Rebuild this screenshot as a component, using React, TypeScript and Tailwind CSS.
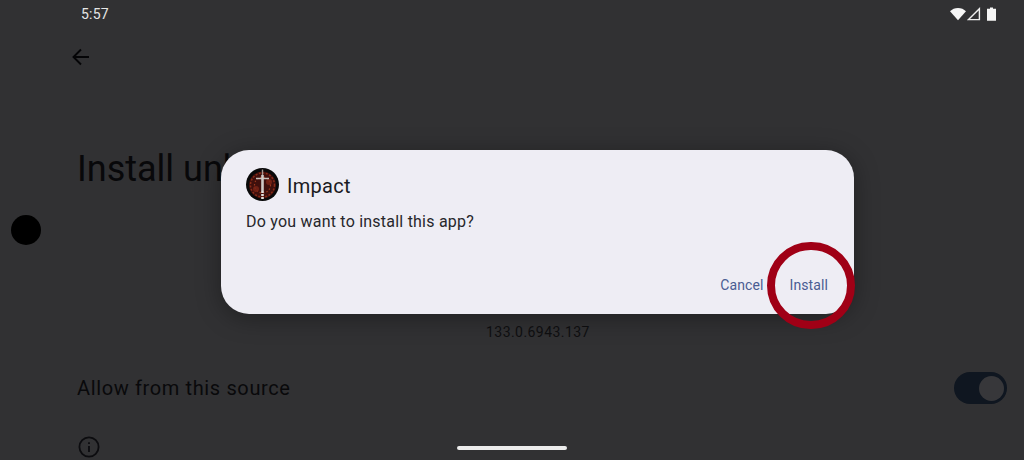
export default function App() {
  return (
    <div className="relative w-[1024px] h-[460px] overflow-hidden bg-[#313133] font-['Roboto',sans-serif]">
      {/* status bar */}
      <div className="flex h-[28px] items-center justify-between pl-[81px] pr-[28px]">
        <span className="text-[14px] leading-[28px] tracking-[0.2px] text-[#e6e6e6]">5:57</span>
        <div className="flex items-center">
          <svg width="16" height="14" viewBox="0 0 16 14"><path d="M0 4.300C2.100 2.200 4.900 1 8 1s5.900 1.200 8 3.300L8 13.200z" fill="#f6f6f6" /></svg>
          <svg width="14" height="14" viewBox="0 0 14 14" className="ml-[1px]"><path d="M1.500 12.600L12.400 1.700V12.600z" fill="none" stroke="#eeeeee" strokeWidth="1.400" /></svg>
          <svg width="9" height="14" viewBox="0 0 9 14" className="ml-[6px]"><path d="M3 0.500h3v1.200h3V13.700H0V1.700h3z" fill="#f6f6f6" /></svg>
        </div>
      </div>

      {/* page content, dimmed */}
      <div className="flex flex-col text-[#08080a]">
        <div className="flex h-[58px] items-center pl-[69px]">
          <svg width="24" height="24" viewBox="0 0 24 24" fill="none" stroke="#050507" strokeWidth="1.900"><path d="M20 12H4.500M12 4.500L4.500 12l7.500 7.500" /></svg>
        </div>
        <h1 className="mt-[38px] pl-[77px] text-[36px] font-normal leading-[90px]">Install unknown apps</h1>
        <div className="mt-[108px] pl-[486px] text-[14px] leading-[20px] tracking-[0.45px] text-[#0f0f11]">133.0.6943.137</div>
        <div className="mt-[30px] flex items-center justify-between pl-[77px] pr-[17px]">
          <span className="text-[20px] leading-[32px] tracking-[0.63px] text-[#09090b]">Allow from this source</span>
          <div className="flex h-[32px] w-[53px] items-center justify-end rounded-full bg-[#0f1620] pr-[3px]">
            <div className="h-[25px] w-[25px] rounded-full bg-[#37373a]" />
          </div>
        </div>
        <div className="mt-[32px] pl-[78px]">
          <svg width="22" height="22" viewBox="0 0 22 22" fill="none" stroke="#0c0c0f" strokeWidth="1.800">
            <circle cx="11" cy="11" r="9.600" />
            <path d="M11 10v6" />
            <path d="M11 6.200v1.800" />
          </svg>
        </div>
      </div>

      {/* floating black dot */}
      <div className="absolute left-[11px] top-[215px] h-[30px] w-[30px] rounded-full bg-black" />

      {/* dialog */}
      <div className="absolute left-[221px] top-[150px] flex h-[164px] w-[633px] flex-col rounded-[28px] bg-[#eeedf4] px-[25px] shadow-[0_4px_24px_rgba(0,0,0,0.35)]">
        <div className="mt-[18px] flex items-center gap-[8px]">
          <svg width="33" height="33" viewBox="0 0 33 33">
            <circle cx="16.500" cy="16.500" r="16.500" fill="#090909" />
            <circle cx="16.500" cy="17" r="13.500" fill="#3f100d" />
            <circle cx="16.500" cy="17" r="12" fill="none" stroke="#8a2c18" strokeWidth="1.500" strokeDasharray="2 1.500" />
            <circle cx="16.500" cy="17" r="8" fill="none" stroke="#9c3a1c" strokeWidth="1.200" strokeDasharray="1.500 2" />
            <circle cx="10" cy="21" r="3" fill="#7a2416" opacity="0.8" />
            <circle cx="23" cy="14" r="3" fill="#7e2616" opacity="0.8" />
            <path d="M16.500 1.500V7" stroke="#a89a94" strokeWidth="1.400" />
            <path d="M10 10.500h13" stroke="#c9c2bc" strokeWidth="1.500" />
            <path d="M16.500 7v16" stroke="#cfcac6" strokeWidth="2.600" />
            <path d="M16.500 23v8" stroke="#e2dedb" strokeWidth="2.600" strokeDasharray="2 1" />
          </svg>
          <span className="translate-y-[2px] text-[20px] leading-[33px] tracking-[0.3px] text-[#1b1b1f]">Impact</span>
        </div>
        <div className="mt-[11px] text-[16px] leading-[20px] tracking-[0.22px] text-[#27272b]">Do you want to install this app?</div>
        <div className="mt-auto mb-[19px] flex justify-end gap-[26px] pr-[1px]">
          <span className="text-[14px] leading-[20px] tracking-[0.1px] text-[#4a5c92]">Cancel</span>
          <span className="text-[14px] leading-[20px] tracking-[0.1px] text-[#4a5c92]">Install</span>
        </div>
      </div>

      {/* red highlight ring */}
      <div className="absolute left-[767px] top-[242px] h-[87px] w-[88px] rounded-full border-[8px] border-[#a00016]" />

      {/* gesture pill */}
      <div className="absolute bottom-[10px] left-[457px] h-[4px] w-[110px] rounded-full bg-[#ececec]" />
    </div>
  );
}
